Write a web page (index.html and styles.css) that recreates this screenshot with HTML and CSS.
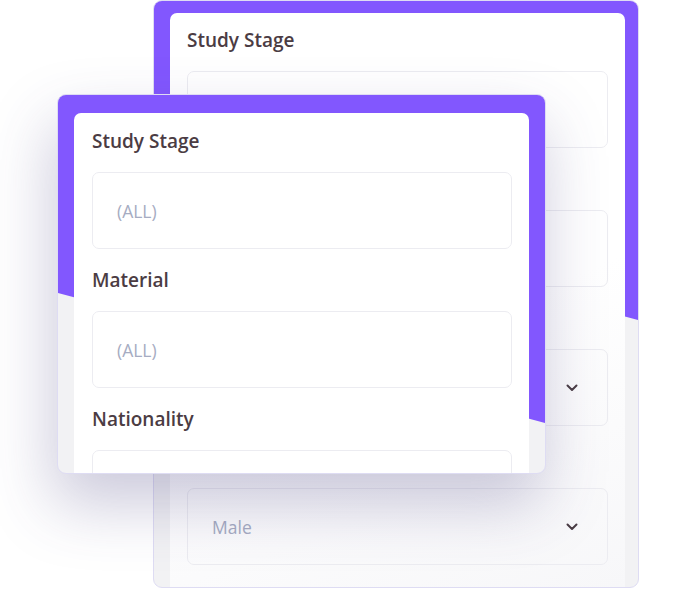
FILE: index.html
```html
<!DOCTYPE html>
<html lang="en">
<head>
<meta charset="utf-8">
<title>Filters</title>
<link rel="stylesheet" href="styles.css">
</head>
<body>
<div class="stage">
  <div class="card card-back">
    <div class="panel">
      <div class="field">
        <div class="label">Study Stage</div>
        <div class="box"><span class="value">(ALL)</span></div>
      </div>
      <div class="field">
        <div class="label">Material</div>
        <div class="box"><span class="value">(ALL)</span></div>
      </div>
      <div class="field">
        <div class="label">Nationality</div>
        <div class="box"><span class="value">(ALL)</span>
          <svg class="chev" width="12" height="8" viewBox="0 0 12 8"><polyline points="1.5,1.5 6,6 10.5,1.5" fill="none" stroke="#4a3d44" stroke-width="2" stroke-linecap="round" stroke-linejoin="round"/></svg>
        </div>
      </div>
      <div class="field">
        <div class="label">Gender</div>
        <div class="box"><span class="value">Male</span>
          <svg class="chev" width="12" height="8" viewBox="0 0 12 8"><polyline points="1.5,1.5 6,6 10.5,1.5" fill="none" stroke="#4a3d44" stroke-width="2" stroke-linecap="round" stroke-linejoin="round"/></svg>
        </div>
      </div>
    </div>
  </div>
  <div class="card card-front">
    <div class="panel">
      <div class="field">
        <div class="label">Study Stage</div>
        <div class="box"><span class="value">(ALL)</span></div>
      </div>
      <div class="field">
        <div class="label">Material</div>
        <div class="box"><span class="value">(ALL)</span></div>
      </div>
      <div class="field">
        <div class="label">Nationality</div>
        <div class="box"></div>
      </div>
    </div>
  </div>
</div>
</body>
</html>
```

FILE: styles.css
```css
* { box-sizing: border-box; }

html, body {
  margin: 0;
  padding: 0;
  background: #ffffff;
}

body {
  font-family: "Open Sans", "Lato", sans-serif;
  width: 693px;
  height: 589px;
  overflow: hidden;
}

.stage {
  position: relative;
  width: 693px;
  height: 589px;
}

.card {
  position: relative;
  overflow: hidden;
  background: #f2f2f4;
  border: 1px solid #dedcf3;
  border-radius: 9px;
}

.card::before {
  content: "";
  position: absolute;
  inset: 0;
  background: #8257fe;
}

.card-back {
  margin-left: 153px;
  width: 486px;
  height: 588px;
  padding: 12px 13px 0 16px;
}

.card-back::before {
  clip-path: polygon(0 0, 100% 0, 100% 319px, 0 190px);
}

.card-front {
  position: absolute;
  left: 57px;
  top: 94px;
  width: 489px;
  height: 380px;
  padding: 18px 16px 0 16px;
  box-shadow: -4px 30px 64px rgba(70, 60, 125, 0.28);
}

.card-front::before {
  clip-path: polygon(0 0, 100% 0, 100% 328px, 0 198px);
}

.panel {
  position: relative;
  height: 100%;
  background: #ffffff;
  border-radius: 7px 7px 0 0;
  padding: 15px 17px 0 17px;
}

.card-front .panel {
  padding-top: 16px;
  padding-left: 18px;
}

.card-back .panel {
  background: linear-gradient(160deg, #ffffff 55%, #f7f7f9 100%);
}

.field {
  display: flex;
  flex-direction: column;
}

.label {
  font-size: 19px;
  line-height: 24px;
  font-weight: 600;
  color: #4b3c43;
  margin-bottom: 19px;
}

.box {
  height: 77px;
  border: 1px solid #ececf1;
  border-radius: 7px;
  padding: 0 29px 0 24px;
  display: flex;
  align-items: center;
  justify-content: space-between;
  margin-bottom: 19px;
}

.value {
  font-size: 17.5px;
  color: #a6acc2;
}

.chev {
  display: block;
}
```
